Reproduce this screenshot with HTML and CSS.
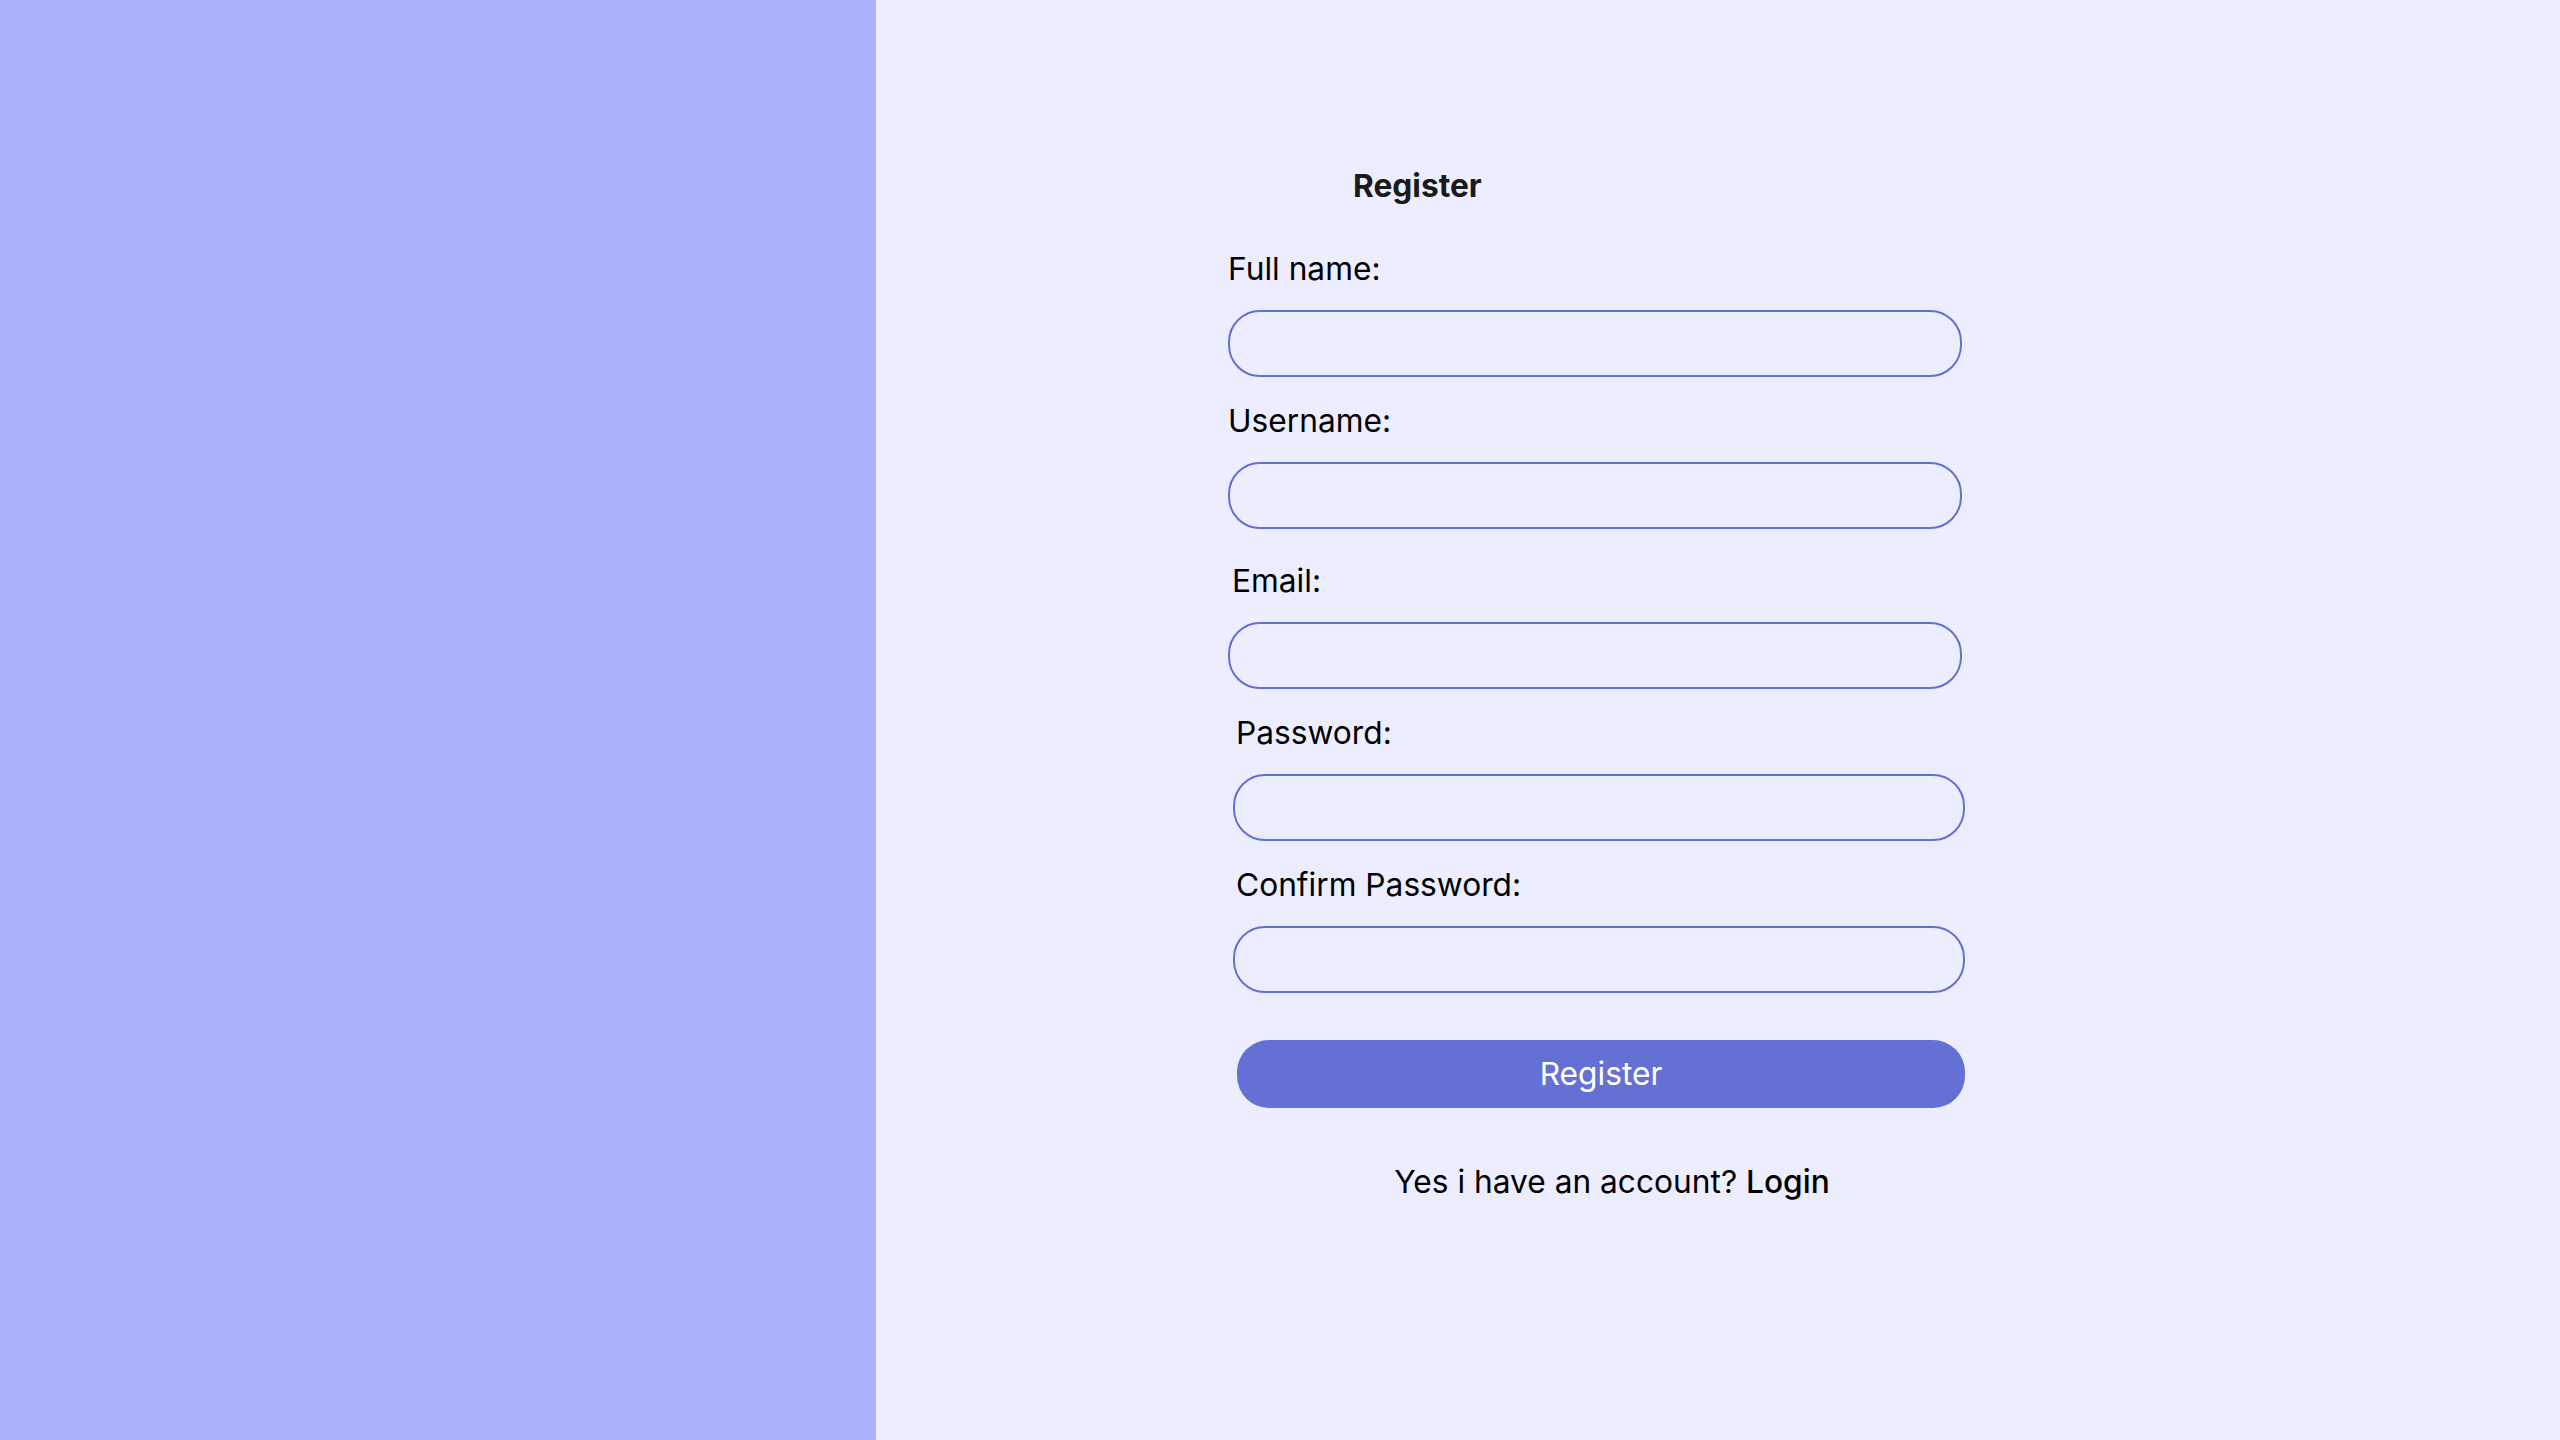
FILE: index.html
```html
<!DOCTYPE html>
<html lang="en">
<head>
<meta charset="utf-8">
<title>Register</title>
<link rel="stylesheet" href="styles.css">
</head>
<body>
<div class="page">
  <aside class="side"></aside>
  <main class="main">
    <form class="form">
      <h2 class="title">Register</h2>
      <label class="label">Full name:</label>
      <input class="field" type="text">
      <label class="label">Username:</label>
      <input class="field" type="text">
      <label class="label label-email">Email:</label>
      <input class="field" type="email">
      <label class="label label-shift">Password:</label>
      <input class="field field-shift" type="password">
      <label class="label label-shift">Confirm Password:</label>
      <input class="field field-shift" type="password">
      <button class="btn" type="button">Register</button>
      <p class="footer">Yes i have an account? <a class="login">Login</a></p>
    </form>
  </main>
</div>
</body>
</html>
```
FILE: styles.css
```css
html, body {
  margin: 0;
  padding: 0;
  height: 1440px;
  overflow: hidden;
  background: #eceeff;
}
.page {
  display: flex;
  width: 2560px;
  height: 1440px;
  font-family: Inter, "Noto Sans", sans-serif;
  font-size: 31.7px;
  line-height: 38px;
  color: #000;
}
.side {
  width: 876px;
  flex: none;
  background: #aeb3ff;
}
.main {
  flex: 1;
  background: #eceeff;
  padding-top: 167px;
}
.form {
  display: flex;
  flex-direction: column;
  align-items: flex-start;
  width: 740px;
  margin-left: 352px;
}
.title {
  margin: 0 0 44px 125px;
  font-size: 31.7px;
  line-height: 38px;
  font-weight: 700;
  color: #1a1a1a;
}
.label {
  display: block;
  padding-top: 0.5px;
  margin: 0 0 22.5px 0;
}
.label-email {
  margin-top: 8px;
  margin-left: 4px;
}
.label-shift {
  margin-left: 8px;
}
.field {
  box-sizing: border-box;
  width: 734px;
  height: 67px;
  margin: 0 0 24px 0;
  border: 2px solid #646fd4;
  border-radius: 32px;
  background: transparent;
  outline: none;
  padding: 0 24px;
  font: inherit;
}
.field-shift {
  margin-left: 5px;
  width: 732px;
}
.btn {
  box-sizing: border-box;
  width: 728px;
  height: 68px;
  margin: 23px 0 0 9px;
  border: none;
  border-radius: 32px;
  background: #6570d4;
  color: #fff;
  font: inherit;
  font-size: 31.7px;
  line-height: 38px;
  cursor: pointer;
}
.footer {
  align-self: stretch;
  margin: 55px 0 0 0;
  padding-left: 28px;
  text-align: center;
}
.login {
  font-weight: 500;
  color: #000;
  text-decoration: none;
}
```
